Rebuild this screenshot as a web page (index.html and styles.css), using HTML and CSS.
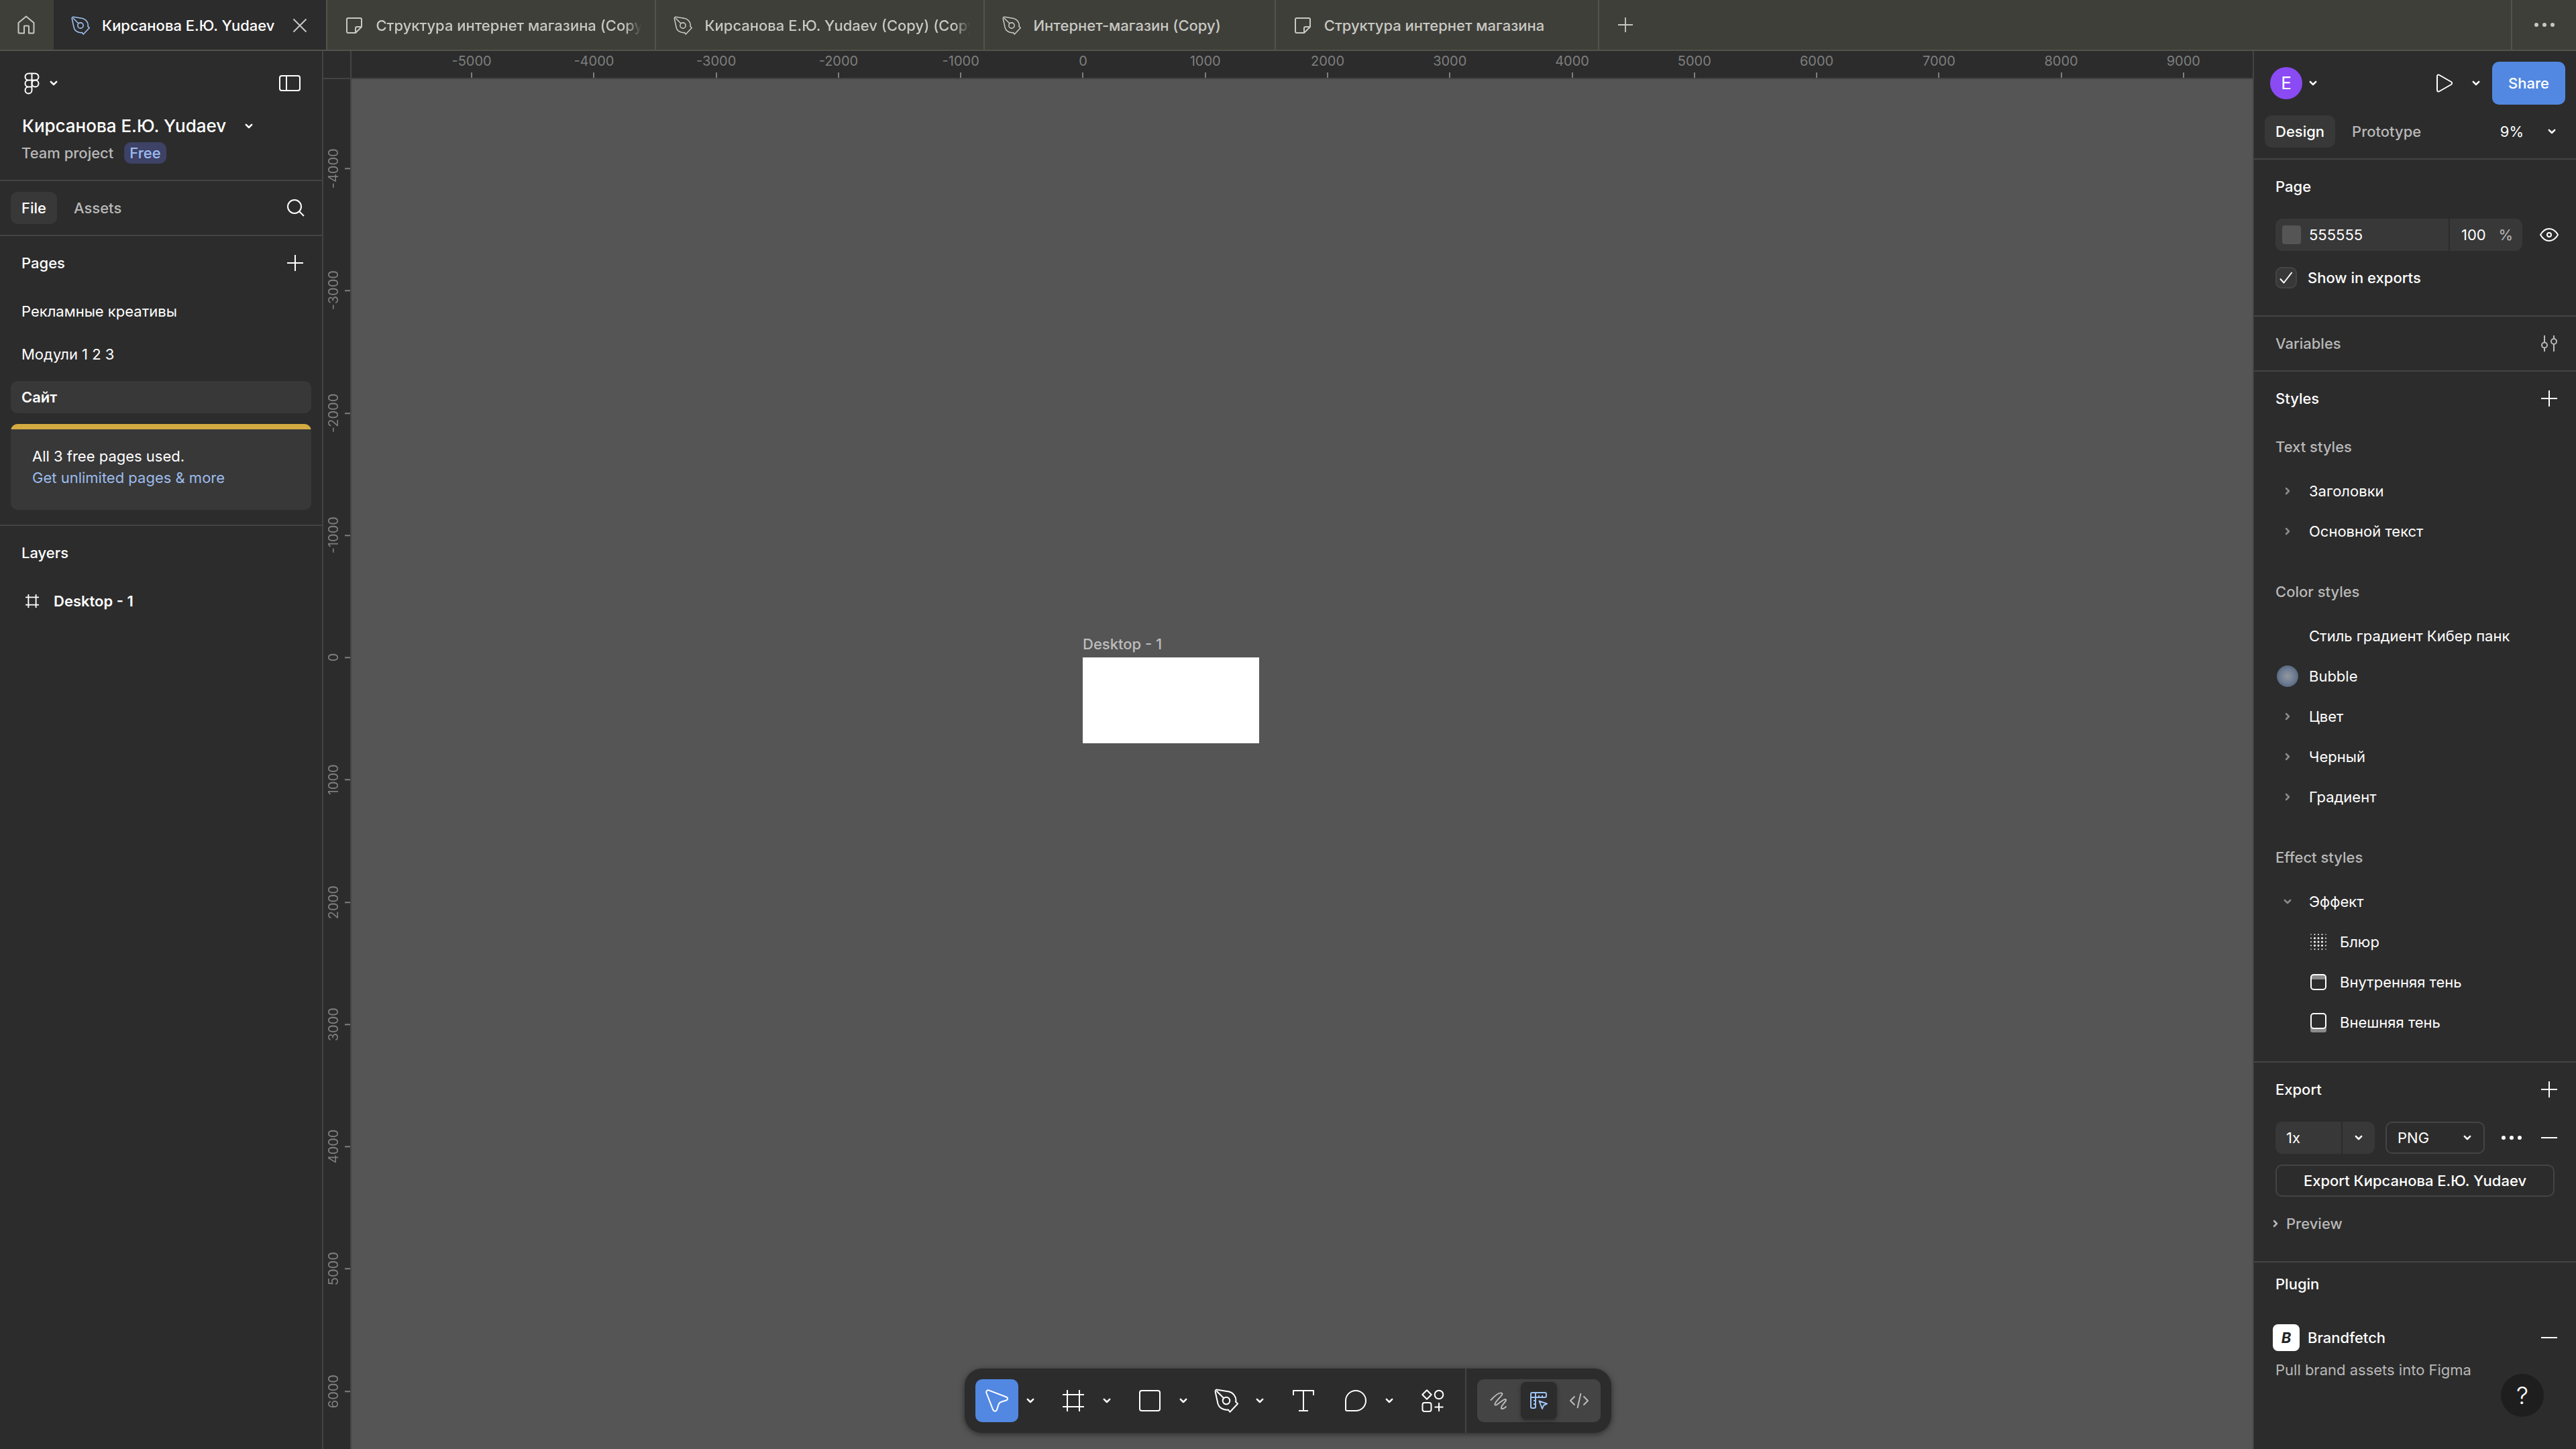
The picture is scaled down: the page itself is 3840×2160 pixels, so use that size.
FILE: index.html
```
<!DOCTYPE html>
<html lang="ru">
<head>
    <meta charset="UTF-8">
    <meta name="viewport" content="width=device-width, initial-scale=1.0">
    <title>Кирсанова Е.Ю. Yudaev</title>
    <link rel="stylesheet" href="styles.css">
</head>
<body>
    <!-- Icon sprite -->
    <svg class="sprite" aria-hidden="true">
        <symbol id="i-chevron" viewBox="0 0 12 8"><path d="M1.8 1.8 6 6l4.2-4.2"/></symbol>
        <symbol id="i-caret" viewBox="0 0 8 12"><path d="M2 2l4 4-4 4"/></symbol>
        <symbol id="i-home" viewBox="0 0 26 28"><path d="M13 1.5 24.5 11v14.5a1 1 0 0 1-1 1H17v-10a1 1 0 0 0-1-1h-5a1 1 0 0 0-1 1v10H2.5a1 1 0 0 1-1-1V11z"/></symbol>
        <symbol id="i-pen" viewBox="0 0 36 36"><path d="M1.7 5C1.3 2.5 2.8 1.2 5 1.7L22 4.5c6 1.3 10.5 7.500 10.5 13l-.5 2 3 3-11.5 12.3-2.5-3.3-2.5.3C12 31 7 27.5 5.5 22.5zM3.5 3.5 14.200 14.200"/><circle cx="18" cy="18" r="5.3"/></symbol>
        <symbol id="i-board" viewBox="0 0 24 24"><path d="M3 1h18a2 2 0 0 1 2 2v11l-9 9H3a2 2 0 0 1-2-2V3a2 2 0 0 1 2-2zM23 14h-7a2 2 0 0 0-2 2v7"/></symbol>
        <symbol id="i-close" viewBox="0 0 22 22"><path d="M1.5 1.5l19 19M20.5 1.5l-19 19"/></symbol>
        <symbol id="i-plus" viewBox="0 0 24 24"><path d="M12 0v24M0 12h24"/></symbol>
        <symbol id="i-minus" viewBox="0 0 24 24"><path d="M0 12h24"/></symbol>
        <symbol id="i-dots" viewBox="0 0 32 8"><g fill="currentColor" stroke="none"><circle cx="4" cy="4" r="3"/><circle cx="16" cy="4" r="3"/><circle cx="28" cy="4" r="3"/></g></symbol>
        <symbol id="i-figma" viewBox="0 0 23 33"><path d="M11.5 1.5h-5a5 5 0 0 0 0 10h5zM11.5 1.5h5a5 5 0 0 1 0 10h-5zM11.5 11.5h-5a5 5 0 0 0 0 10h5zM11.5 21.5h-5a5 5 0 1 0 5 5z"/><circle cx="16.5" cy="16.5" r="5"/></symbol>
        <symbol id="i-sidebar" viewBox="0 0 32 24"><rect x="1" y="1" width="30" height="22" rx="3"/><path d="M11 1v22"/></symbol>
        <symbol id="i-search" viewBox="0 0 28 28"><circle cx="12" cy="12" r="10"/><path d="M19.5 19.5 26 26"/></symbol>
        <symbol id="i-frame" viewBox="0 0 32 32"><path d="M7 0v32M25 0v32M0 7h32M0 25h32"/></symbol>
        <symbol id="i-move" viewBox="0 0 34 34"><path d="M1.5 5.5C.5 2.7 2.7.6 5.4 1.6l25.8 9.9c2.5 1.1 2.4 4.2-.2 5l-7.5 2.2c-2 .6-3.2 1.8-3.9 3.7L17 30.6c-1 2.7-4.6 2.7-5.7 0z"/></symbol>
        <symbol id="i-rect" viewBox="0 0 32 32"><rect x="1" y="1" width="30" height="30" rx="3"/></symbol>
        <symbol id="i-text" viewBox="0 0 32 32"><path d="M1 8V1h30v7M16 1v30M9 31h14"/></symbol>
        <symbol id="i-comment" viewBox="0 0 32 32"><path d="M1 16a15 15 0 1 1 15 15H3a2 2 0 0 1-2-2z"/></symbol>
        <symbol id="i-actions" viewBox="0 0 34 34"><path d="M8 1.3 14.7 8 8 14.7 1.3 8z"/><circle cx="26" cy="8" r="6.3"/><rect x="1.5" y="20" width="13" height="13" rx="3"/><path d="M26 20v13M19.5 26.5h13"/></symbol>
        <symbol id="i-scribble" viewBox="0 0 26 26"><path d="M1 12.5C6.5 6.5 14.500-.5 18 2c3 2.5-12 12.5-10.5 17C9.5 22.5 19.5 9.5 23.5 11c3 1.8-8 9.5-6.5 13.3 1.5 2 4.500 0 7.500-2.8"/></symbol>
        <symbol id="i-design" viewBox="0 0 26 26"><path d="M3 1h19a2 2 0 0 1 2 2v3a2 2 0 0 1-2 2H8v14a2 2 0 0 1-2 2H3a2 2 0 0 1-2-2V3a2 2 0 0 1 2-2zM8 1v7M1 8h7M13 8V5M18 8V5M8 13H5M8 18H5M13.5 13.5l11.5 4-5 2.5-2 5z"/></symbol>
        <symbol id="i-code" viewBox="0 0 28 24"><path d="M7.500 5.5 1 12l6.5 6.5M20.5 5.5 27 12l-6.5 6.5M16.5 1l-5 22"/></symbol>
        <symbol id="i-play" viewBox="0 0 26 28"><path d="M2 4v20c0 2.5 1.6 3.2 3.5 2L23 16c1.5-1 1.5-3 0-4L5.5 2C3.5.8 2 1.5 2 4z"/></symbol>
        <symbol id="i-eye" viewBox="0 0 28 20"><path d="M1 10C4.5 4 9 1 14 1s9.500 3 13 9c-3.5 6-8 9-13 9S4.500 16 1 10z"/><circle cx="14" cy="10" r="3"/></symbol>
        <symbol id="i-sliders" viewBox="0 0 24 24"><path d="M5 0v10M5 19v5M19 0v4M19 13v11"/><circle cx="5" cy="14.5" r="4"/><circle cx="19" cy="9" r="4"/></symbol>
        <symbol id="i-check" viewBox="0 0 20 18"><path d="M1 10.5 6.5 16.5 18.5 1"/></symbol>
        <symbol id="i-blur" viewBox="0 0 26 26"><g stroke-linecap="round" stroke-dasharray="0 5.5"><path d="M7.500 2h12M7.500 24h12M2 7.500h23M2 13h23M2 18.500h23"/><path stroke="#a0a0a0" d="M2 2h1M24 2h1M2 24h1M24 24h1"/><path stroke-width="3" d="M7.500 7.500h12M7.500 13h12M7.500 18.500h12"/></g></symbol>
        <symbol id="i-inner" viewBox="0 0 24 30"><path fill="#8a8a8a" stroke="none" d="M2 5h20v6H2z"/><rect x="1" y="4" width="22" height="22" rx="4"/></symbol>
        <symbol id="i-drop" viewBox="0 0 24 30"><path fill="#8a8a8a" stroke="none" d="M0 22h24v5a3 3 0 0 1-3 3H3a3 3 0 0 1-3-3z"/><rect x="1" y="2" width="22" height="22" rx="4" fill="#2c2c2c"/></symbol>
    </svg>

    <!-- File tabs -->
    <header class="tabbar">
        <button class="tab-home" aria-label="Home"><svg class="icon" width="26" height="28"><use href="#i-home"/></svg></button>
        <nav class="tabs">
            <div class="tab active">
                <svg class="icon tab-icon" width="28" height="28"><use href="#i-pen"/></svg>
                <a href="#" class="tab-name">Кирсанова Е.Ю. Yudaev</a>
                <button class="tab-close" aria-label="Close tab"><svg class="icon" width="22" height="22"><use href="#i-close"/></svg></button>
            </div>
            <div class="tab">
                <svg class="icon tab-icon" width="24" height="24"><use href="#i-board"/></svg>
                <a href="#" class="tab-name fade">Структура интернет магазина (Copy)</a>
            </div>
            <div class="tab">
                <svg class="icon tab-icon" width="28" height="28"><use href="#i-pen"/></svg>
                <a href="#" class="tab-name fade">Кирсанова Е.Ю. Yudaev (Copy) (Copy)</a>
            </div>
            <div class="tab">
                <svg class="icon tab-icon" width="28" height="28"><use href="#i-pen"/></svg>
                <a href="#" class="tab-name">Интернет-магазин (Copy)</a>
            </div>
            <div class="tab">
                <svg class="icon tab-icon" width="24" height="24"><use href="#i-board"/></svg>
                <a href="#" class="tab-name">Структура интернет магазина</a>
            </div>
        </nav>
        <button class="tab-new" aria-label="New tab"><svg class="icon" width="22" height="22"><use href="#i-plus"/></svg></button>
        <button class="tab-more" aria-label="More"><svg class="icon" width="32" height="8"><use href="#i-dots"/></svg></button>
    </header>

    <div class="workspace">
        <!-- Left panel -->
        <aside class="panel left">
            <div class="menu-row">
                <button class="logo-button" aria-label="Main menu">
                    <svg class="icon" width="23" height="33"><use href="#i-figma"/></svg>
                    <svg class="icon chev" width="12" height="8"><use href="#i-chevron"/></svg>
                </button>
                <button aria-label="Toggle sidebar"><svg class="icon" width="32" height="24"><use href="#i-sidebar"/></svg></button>
            </div>
            <div class="file-info">
                <div class="file-title">
                    <h1>Кирсанова Е.Ю. Yudaev</h1>
                    <button aria-label="File menu"><svg class="icon chev" width="12" height="8"><use href="#i-chevron"/></svg></button>
                </div>
                <div class="file-team">
                    <span>Team project</span>
                    <span class="badge">Free</span>
                </div>
            </div>
            <div class="panel-tabs">
                <button class="pill active">File</button>
                <button class="pill">Assets</button>
                <button class="push" aria-label="Search"><svg class="icon" width="28" height="28"><use href="#i-search"/></svg></button>
            </div>
            <section class="pages">
                <div class="section-head">
                    <h2>Pages</h2>
                    <button aria-label="Add page"><svg class="icon" width="24" height="24"><use href="#i-plus"/></svg></button>
                </div>
                <ul class="page-list">
                    <li><a href="#">Рекламные креативы</a></li>
                    <li><a href="#">Модули 1 2 3</a></li>
                    <li><a href="#" class="active">Сайт</a></li>
                </ul>
                <div class="upsell">
                    <p>All 3 free pages used.</p>
                    <a href="#">Get unlimited pages &amp; more</a>
                </div>
            </section>
            <section class="layers">
                <div class="section-head"><h2>Layers</h2></div>
                <div class="layer-row">
                    <svg class="icon" width="20" height="20"><use href="#i-frame" class="thick"/></svg>
                    <span>Desktop - 1</span>
                </div>
            </section>
        </aside>

        <!-- Canvas with rulers -->
        <main class="stage">
            <div class="ruler-corner"></div>
            <div class="ruler-h">
                <span>-5000</span><span>-4000</span><span>-3000</span><span>-2000</span><span>-1000</span>
                <span>0</span><span>1000</span><span>2000</span><span>3000</span><span>4000</span>
                <span>5000</span><span>6000</span><span>7000</span><span>8000</span><span>9000</span>
            </div>
            <div class="ruler-v">
                <div class="ruler-scale">
                    <span>-4000</span><span>-3000</span><span>-2000</span><span>-1000</span><span>0</span>
                    <span>1000</span><span>2000</span><span>3000</span><span>4000</span><span>5000</span><span>6000</span>
                </div>
            </div>
            <div class="canvas">
                <div class="frame">
                    <span class="frame-name">Desktop - 1</span>
                    <div class="frame-body"></div>
                </div>
            </div>
        </main>

        <!-- Right panel -->
        <aside class="panel right">
            <div class="share-row">
                <span class="avatar">E</span>
                <button aria-label="Account"><svg class="icon chev" width="12" height="8"><use href="#i-chevron"/></svg></button>
                <button class="push" aria-label="Present"><svg class="icon" width="26" height="28"><use href="#i-play"/></svg></button>
                <button class="play-more" aria-label="Present options"><svg class="icon chev" width="12" height="8"><use href="#i-chevron"/></svg></button>
                <button class="share">Share</button>
            </div>
            <div class="mode-row">
                <button class="pill active">Design</button>
                <button class="pill">Prototype</button>
                <button class="zoom push">9% <svg class="icon chev" width="12" height="8"><use href="#i-chevron"/></svg></button>
            </div>

            <section class="page-props">
                <div class="section-head"><h2>Page</h2></div>
                <div class="prop-row">
                    <div class="color-field">
                        <span class="swatch"></span>
                        <input type="text" class="hex" value="555555" aria-label="Page color">
                        <span class="opacity">
                            <input type="text" value="100" aria-label="Opacity">
                            <span class="unit">%</span>
                        </span>
                    </div>
                    <button class="push" aria-label="Toggle visibility"><svg class="icon" width="28" height="20"><use href="#i-eye"/></svg></button>
                </div>
                <label class="check-row">
                    <span class="checkbox">
                        <input type="checkbox" checked>
                        <svg class="icon" width="20" height="18"><use href="#i-check"/></svg>
                    </span>
                    Show in exports
                </label>
            </section>

            <section>
                <div class="section-head muted">
                    <h2>Variables</h2>
                    <button aria-label="Open variables"><svg class="icon" width="24" height="24"><use href="#i-sliders"/></svg></button>
                </div>
            </section>

            <section class="styles">
                <div class="section-head">
                    <h2>Styles</h2>
                    <button aria-label="Add style"><svg class="icon" width="24" height="24"><use href="#i-plus"/></svg></button>
                </div>
                <h3>Text styles</h3>
                <ul class="style-list">
                    <li><span class="mark"><svg class="icon chev" width="8" height="12"><use href="#i-caret"/></svg></span>Заголовки</li>
                    <li><span class="mark"><svg class="icon chev" width="8" height="12"><use href="#i-caret"/></svg></span>Основной текст</li>
                </ul>
                <h3>Color styles</h3>
                <ul class="style-list">
                    <li><span class="mark"></span>Стиль градиент Кибер панк</li>
                    <li><span class="mark"><span class="bubble"></span></span>Bubble</li>
                    <li><span class="mark"><svg class="icon chev" width="8" height="12"><use href="#i-caret"/></svg></span>Цвет</li>
                    <li><span class="mark"><svg class="icon chev" width="8" height="12"><use href="#i-caret"/></svg></span>Черный</li>
                    <li><span class="mark"><svg class="icon chev" width="8" height="12"><use href="#i-caret"/></svg></span>Градиент</li>
                </ul>
                <h3>Effect styles</h3>
                <ul class="style-list">
                    <li><span class="mark"><svg class="icon chev" width="12" height="8"><use href="#i-chevron"/></svg></span>Эффект</li>
                    <li class="nested"><svg class="icon" width="26" height="26"><use href="#i-blur"/></svg>Блюр</li>
                    <li class="nested"><svg class="icon" width="26" height="30"><use href="#i-inner"/></svg>Внутренняя тень</li>
                    <li class="nested"><svg class="icon" width="26" height="30"><use href="#i-drop"/></svg>Внешняя тень</li>
                </ul>
            </section>

            <section class="export">
                <div class="section-head">
                    <h2>Export</h2>
                    <button aria-label="Add export"><svg class="icon" width="24" height="24"><use href="#i-plus"/></svg></button>
                </div>
                <div class="prop-row">
                    <div class="scale-field">
                        <input type="text" value="1x" aria-label="Scale">
                        <button aria-label="Scale options"><svg class="icon chev" width="12" height="8"><use href="#i-chevron"/></svg></button>
                    </div>
                    <div class="format-field">
                        <select aria-label="Format"><option>PNG</option><option>JPG</option><option>SVG</option><option>PDF</option></select>
                        <svg class="icon chev" width="12" height="8"><use href="#i-chevron"/></svg>
                    </div>
                    <button class="push" aria-label="Export options"><svg class="icon" width="32" height="8"><use href="#i-dots"/></svg></button>
                    <button class="row-end" aria-label="Remove export"><svg class="icon" width="24" height="24"><use href="#i-minus"/></svg></button>
                </div>
                <button class="export-button">Export Кирсанова Е.Ю. Yudaev</button>
                <button class="preview"><svg class="icon chev" width="8" height="12"><use href="#i-caret"/></svg>Preview</button>
            </section>

            <section class="plugin">
                <h2>Plugin</h2>
                <div class="plugin-row">
                    <span class="plugin-logo">B</span>
                    <span>Brandfetch</span>
                    <button class="push" aria-label="Remove plugin"><svg class="icon" width="24" height="24"><use href="#i-minus"/></svg></button>
                </div>
                <p>Pull brand assets into Figma</p>
            </section>
        </aside>
    </div>

    <!-- Floating toolbar -->
    <div class="toolbar-wrap">
        <div class="toolbar">
            <div class="tool">
                <button class="tool-main active" aria-label="Move"><svg class="icon" width="34" height="34"><use href="#i-move"/></svg></button>
                <button class="tool-more" aria-label="Move tools"><svg class="icon chev" width="12" height="8"><use href="#i-chevron"/></svg></button>
            </div>
            <div class="tool">
                <button class="tool-main" aria-label="Frame"><svg class="icon" width="32" height="32"><use href="#i-frame"/></svg></button>
                <button class="tool-more" aria-label="Region tools"><svg class="icon chev" width="12" height="8"><use href="#i-chevron"/></svg></button>
            </div>
            <div class="tool">
                <button class="tool-main" aria-label="Rectangle"><svg class="icon" width="32" height="32"><use href="#i-rect"/></svg></button>
                <button class="tool-more" aria-label="Shape tools"><svg class="icon chev" width="12" height="8"><use href="#i-chevron"/></svg></button>
            </div>
            <div class="tool">
                <button class="tool-main" aria-label="Pen"><svg class="icon" width="36" height="36"><use href="#i-pen"/></svg></button>
                <button class="tool-more" aria-label="Drawing tools"><svg class="icon chev" width="12" height="8"><use href="#i-chevron"/></svg></button>
            </div>
            <button class="tool-main tool-single" aria-label="Text"><svg class="icon" width="32" height="32"><use href="#i-text"/></svg></button>
            <div class="tool">
                <button class="tool-main" aria-label="Comment"><svg class="icon" width="32" height="32"><use href="#i-comment"/></svg></button>
                <button class="tool-more" aria-label="Comment tools"><svg class="icon chev" width="12" height="8"><use href="#i-chevron"/></svg></button>
            </div>
            <button class="tool-main tool-single" aria-label="Actions"><svg class="icon" width="34" height="34"><use href="#i-actions"/></svg></button>
            <div class="divider"></div>
            <div class="modes">
                <button aria-label="Draw"><svg class="icon" width="26" height="26"><use href="#i-scribble"/></svg></button>
                <button class="active" aria-label="Design"><svg class="icon" width="26" height="26"><use href="#i-design"/></svg></button>
                <button aria-label="Dev Mode"><svg class="icon" width="28" height="24"><use href="#i-code"/></svg></button>
            </div>
        </div>
    </div>

    <button class="help" aria-label="Help">?</button>
</body>
</html>
```
FILE: styles.css
```
:root {
    --bg: #2c2c2c;
    --bg-hover: #383838;
    --line: #444444;
    --text: #ffffff;
    --muted: #b8b8b8;
    --blue: #5288e2;
    --canvas: #555555;
}

* { box-sizing: border-box; }

body {
    margin: 0;
    height: 100vh;
    display: flex;
    flex-direction: column;
    overflow: hidden;
    background: var(--bg);
    color: var(--text);
    font-family: Inter, "Liberation Sans", sans-serif;
    font-size: 22px;
    line-height: 32px;
}

h1, h2, h3, p, ul { margin: 0; padding: 0; }
h2 { font-size: 22px; font-weight: 550; }
h3 { font-size: 22px; font-weight: 450; color: var(--muted); }
ul { list-style: none; }
a { color: inherit; text-decoration: none; }

button, input, select {
    margin: 0;
    padding: 0;
    border: 0;
    background: none;
    color: inherit;
    font: inherit;
}
button {
    display: flex;
    align-items: center;
    justify-content: center;
    cursor: pointer;
}

.sprite { position: absolute; width: 0; height: 0; }
.icon {
    flex: none;
    display: block;
    fill: none;
    stroke: currentColor;
    stroke-width: 2;
    stroke-linejoin: round;
}
.chev { stroke-width: 2.5; stroke-linecap: round; }
.thick { stroke-width: 3; }
.push { margin-left: auto; }

/* Tab bar */
.tabbar {
    flex: none;
    display: flex;
    height: 76px;
    background: #3f3f3a;
    border-bottom: 2px solid #53534e;
    color: #c8c8c2;
}
.tab-home {
    width: 80px;
    padding-right: 2px;
}
.tabs { display: flex; min-width: 0; }
.tab {
    display: flex;
    align-items: center;
    max-width: 490px;
    padding: 2px 20px 0 24px;
    border-right: 2px solid #53534e;
    font-weight: 550;
}
.tab-icon { width: 32px; margin-right: 16px; }
.tab-name {
    padding-right: 60px;
    overflow: hidden;
    white-space: nowrap;
}
.tab-name.fade { mask-image: linear-gradient(to right, #000 calc(100% - 24px), transparent); }
.tab.active {
    padding-right: 28px;
    background: var(--bg);
    color: var(--text);
}
.tab.active .tab-icon { color: #9fc3f5; }
.tab.active .tab-name { padding-right: 27px; }
.tab-close { color: #c8c8c8; }
.tab-new { width: 78px; }
.tab-more {
    width: 97px;
    margin-left: auto;
    border-left: 2px solid #53534e;
}

/* Panels */
.workspace {
    flex: 1;
    min-height: 0;
    display: grid;
    grid-template-columns: 482px minmax(0, 1fr) 482px;
}
.panel { overflow: hidden; }
.panel > section { border-bottom: 2px solid var(--line); }
.panel > section:last-child { border-bottom: 0; }
.left { border-right: 2px solid var(--line); }
.right { border-left: 2px solid var(--line); }

.section-head {
    display: flex;
    align-items: center;
    justify-content: space-between;
    height: 80px;
    padding: 0 28px 0 32px;
}
.section-head.muted { color: var(--muted); }

.pill {
    height: 48px;
    padding: 0 16px;
    border-radius: 10px;
    color: var(--muted);
    font-weight: 450;
}
.pill.active {
    background: var(--bg-hover);
    color: var(--text);
    font-weight: 550;
}

/* Left panel */
.menu-row {
    display: flex;
    align-items: center;
    justify-content: space-between;
    height: 96px;
    padding: 0 32px 0 36px;
}
.logo-button { gap: 15px; }
.file-info {
    padding: 0 32px 24px;
    border-bottom: 2px solid var(--line);
}
.file-title {
    display: flex;
    align-items: center;
    gap: 28px;
    margin-bottom: 8px;
    padding-left: 1px;
}
.file-title h1 { font-size: 26px; font-weight: 550; }
.file-team {
    display: flex;
    align-items: center;
    gap: 16px;
    color: var(--muted);
    font-weight: 450;
}
.badge {
    padding: 0 8px;
    border-radius: 10px;
    background: #3d4266;
    color: #9dbcf2;
}
.panel-tabs {
    display: flex;
    align-items: center;
    gap: 9px;
    height: 82px;
    padding: 0 25px 0 16px;
    border-bottom: 2px solid var(--line);
}
.pages { padding: 0 0 22px; }
.pages .section-head, .layers .section-head { margin-bottom: 8px; }
.page-list, .upsell { margin: 0 16px; }
.page-list li { margin-bottom: 16px; }
.page-list a {
    display: block;
    padding: 8px 16px;
    border-radius: 10px;
}
.page-list a.active {
    background: var(--bg-hover);
    font-weight: 600;
}
.upsell {
    height: 128px;
    padding: 24px 32px;
    border-radius: 10px;
    background: linear-gradient(#d3ab42, #d3ab42) 0 0 / 100% 8px no-repeat var(--bg-hover);
    padding-top: 32px;
}
.upsell a { color: #9cbcec; }
.layer-row {
    display: flex;
    align-items: center;
    gap: 22px;
    height: 48px;
    padding: 0 38px;
    font-weight: 600;
}

/* Canvas and rulers */
.stage {
    display: grid;
    grid-template-columns: 42px minmax(0, 1fr);
    grid-template-rows: 42px minmax(0, 1fr);
    min-height: 0;
    font-size: 20px;
    line-height: 24px;
    color: #7e7e7e;
}
.ruler-corner, .ruler-h { border-bottom: 2px solid var(--line); }
.ruler-corner, .ruler-v { border-right: 2px solid var(--line); }
.ruler-h {
    display: grid;
    grid-auto-flow: column;
    grid-auto-columns: 1fr;
    padding: 0 12px 0 88px;
}
.ruler-h span {
    padding-top: 3px;
    text-align: center;
    background: linear-gradient(#7e7e7e, #7e7e7e) 50% 100% / 2px 8px no-repeat;
}
.ruler-v {
    padding-top: 42px;
    overflow: hidden;
}
.ruler-scale {
    display: grid;
    grid-auto-rows: 1fr;
    height: calc(100% + 5px);
}
/* Rotated half a turn so the numbers read upwards */
.ruler-scale span {
    padding-right: 3px;
    writing-mode: vertical-rl;
    transform: rotate(180deg);
    text-align: center;
    background: linear-gradient(#7e7e7e, #7e7e7e) 0 50% / 8px 2px no-repeat;
}
.canvas {
    position: relative;
    background: var(--canvas);
}
.frame {
    position: absolute;
    left: 1090px;
    top: 826px;
    width: 263px;
    color: #bdbdbd;
    font-size: 22px;
    font-weight: 450;
}
.frame-name { display: block; height: 36px; line-height: 32px; }
.frame-body { height: 128px; background: #fff; }

/* Right panel */
.share-row {
    display: flex;
    align-items: center;
    height: 96px;
    padding: 0 16px 0 24px;
}
.avatar {
    width: 48px;
    margin-right: 10px;
    border-radius: 50%;
    background: #8a4bf5;
    font-size: 26px;
    line-height: 48px;
    text-align: center;
}
.play-more { margin: 0 18px 0 28px; }
.share {
    height: 64px;
    padding: 0 24px;
    border-radius: 10px;
    background: var(--blue);
    font-weight: 500;
}
.mode-row {
    display: flex;
    align-items: flex-start;
    gap: 9px;
    height: 66px;
    padding: 0 30px 0 16px;
    border-bottom: 2px solid var(--line);
}
.zoom { height: 48px; gap: 36px; }

.prop-row {
    display: flex;
    align-items: center;
    height: 48px;
    margin-top: 8px;
    padding: 0 26px 0 32px;
}
.page-props { padding-bottom: 40px; }
.color-field {
    display: flex;
    align-items: center;
    width: 368px;
    height: 48px;
    padding-left: 10px;
    border-radius: 10px;
    background: var(--bg-hover);
}
.swatch {
    width: 28px;
    height: 28px;
    margin-right: 12px;
    border-radius: 4px;
    background: var(--canvas);
}
.hex { flex: 1; min-width: 0; }
.opacity {
    display: flex;
    width: 110px;
    padding: 8px 14px 8px 17px;
    border-left: 2px solid var(--bg);
    justify-content: space-between;
}
.opacity input { width: 50px; }
.unit { color: var(--muted); }
.check-row {
    display: flex;
    align-items: center;
    gap: 16px;
    margin-top: 24px;
    padding: 0 32px;
    font-weight: 450;
}
.checkbox { display: grid; place-items: center; }
.checkbox input {
    grid-area: 1 / 1;
    appearance: none;
    width: 32px;
    height: 32px;
    border: 2px solid var(--line);
    border-radius: 9px;
    background: var(--bg-hover);
}
.checkbox .icon { grid-area: 1 / 1; pointer-events: none; }

.styles { padding-bottom: 28px; }
.styles h3 { padding: 16px 32px; }
.style-list { padding-top: 4px; }
.style-list + h3 { margin-top: 28px; }
.style-list li {
    display: flex;
    align-items: center;
    gap: 16px;
    height: 60px;
    padding: 0 34px;
}
.style-list .nested { padding-left: 83px; gap: 19px; }
.mark {
    display: grid;
    place-items: center;
    width: 32px;
    color: #8c8c8c;
}
.bubble {
    width: 32px;
    height: 32px;
    border-radius: 50%;
    background: radial-gradient(circle, #93979c 0%, #6b7b92 50%, #56657a 75%);
}

.export { padding-bottom: 32px; }
.export .prop-row { padding-right: 28px; }
.scale-field {
    display: grid;
    grid-template-columns: 98px 48px;
    gap: 2px;
    width: 148px;
    margin-right: 16px;
    border-radius: 10px;
    overflow: hidden;
}
.scale-field > * { height: 48px; background: var(--bg-hover); }
.scale-field input { min-width: 0; padding-left: 16px; }
.format-field {
    display: grid;
    align-items: center;
    width: 148px;
}
.format-field select {
    grid-area: 1 / 1;
    appearance: none;
    height: 48px;
    padding: 0 16px;
    border: 2px solid var(--line);
    border-radius: 10px;
}
.format-field .icon {
    grid-area: 1 / 1;
    justify-self: end;
    margin-right: 20px;
    pointer-events: none;
}
.row-end { margin-left: 28px; }
.export-button {
    width: 416px;
    height: 48px;
    margin: 16px 32px;
    border: 2px solid var(--line);
    border-radius: 10px;
    font-weight: 450;
}
.preview {
    gap: 12px;
    height: 48px;
    padding: 0 28px;
    color: var(--muted);
    font-weight: 500;
}

.plugin h2 { padding: 16px 32px; }
.plugin-row {
    display: flex;
    align-items: center;
    gap: 12px;
    margin: 28px 0 12px;
    padding: 0 28px;
    font-weight: 500;
}
.plugin-logo {
    width: 40px;
    border-radius: 8px;
    background: #fff;
    color: #222;
    font-size: 22px;
    font-style: italic;
    font-weight: 700;
    line-height: 40px;
    text-align: center;
}
.plugin p { padding: 0 32px; color: var(--muted); }

/* Floating toolbar */
.toolbar-wrap {
    position: fixed;
    left: 0;
    right: 0;
    bottom: 24px;
    display: flex;
    justify-content: center;
    pointer-events: none;
}
.toolbar {
    display: flex;
    align-items: center;
    gap: 14px;
    height: 96px;
    padding: 0 16px;
    border-radius: 26px;
    background: var(--bg);
    box-shadow: 0 2px 10px rgba(0, 0, 0, .5);
    pointer-events: auto;
}
.tool { display: flex; }
.tool-main {
    width: 64px;
    height: 64px;
    border-radius: 10px;
}
.tool-main.active { background: var(--blue); }
.tool-single { width: 65px; }
.tool-more { width: 36px; }
.divider {
    width: 2px;
    height: 96px;
    margin: 0 2px;
    background: var(--line);
}
.modes {
    display: flex;
    align-items: center;
    gap: 6px;
    height: 64px;
    padding: 0 5px;
    border-radius: 10px;
    background: var(--line);
    color: #bcbcbc;
}
.modes button {
    width: 54px;
    height: 56px;
    border-radius: 8px;
}
.modes .active {
    background: var(--bg);
    color: #9fc3f5;
    box-shadow: 0 2px 6px rgba(0, 0, 0, .3);
}

.help {
    position: fixed;
    right: 48px;
    bottom: 48px;
    width: 64px;
    height: 64px;
    border-radius: 50%;
    background: #1e1e1e;
    font-size: 36px;
    font-weight: 300;
}
```
